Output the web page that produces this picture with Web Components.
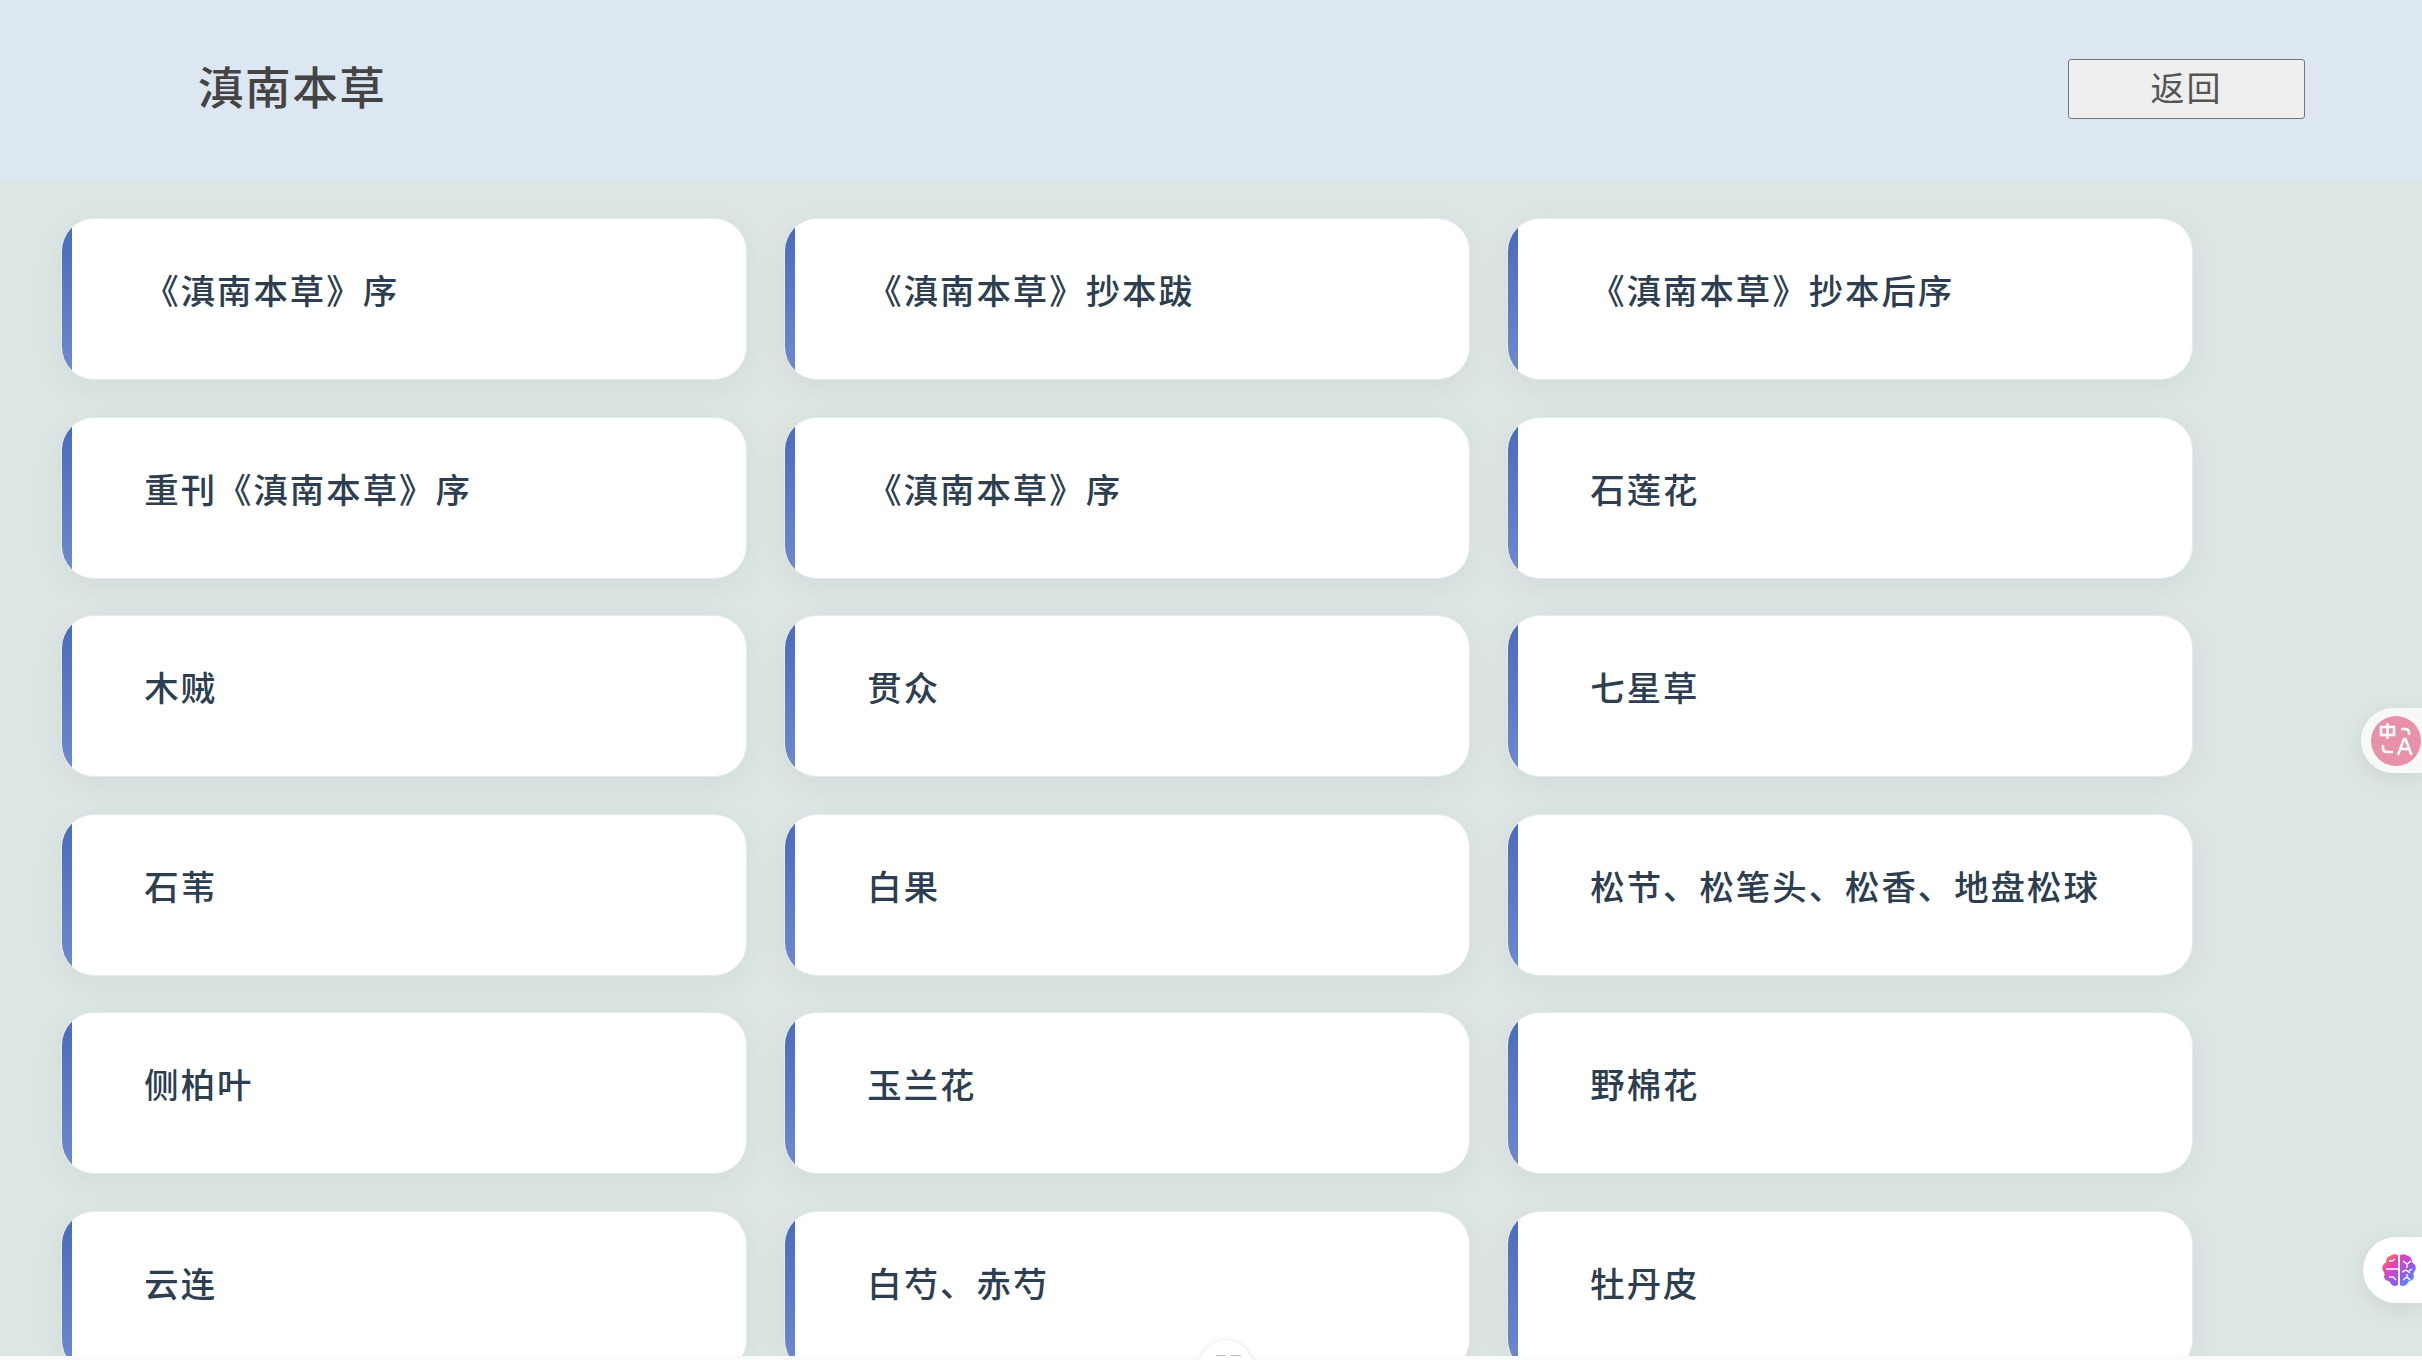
<!DOCTYPE html>
<html lang="zh"><head><meta charset="utf-8"><style>
html,body{margin:0;height:100%;background:#fafafa;overflow:hidden;font-family:"Noto Sans CJK SC","Liberation Sans",sans-serif}
</style></head><body>
<herb-page></herb-page>
<script>
class HerbHeader extends HTMLElement{constructor(){super();this.attachShadow({mode:'open'}).innerHTML=`<style>
:host{display:flex;align-items:flex-start;justify-content:space-between;height:181px;background:#dce7f1;padding:59px 117px 0 198px;box-sizing:border-box}
h1{margin:-4.5px 0 0;font-size:45.6px;line-height:60px;font-weight:500;color:#444;letter-spacing:1.5px}
button{width:237px;height:60px;box-sizing:border-box;background:#efefef;border:1px solid #767676;border-radius:3px;color:#555;font:400 34px/1 "Noto Sans CJK SC",sans-serif;padding:0 0 5px;letter-spacing:2px}
</style><h1><slot name="title"></slot></h1><button><slot name="action"></slot></button>`}}
class HerbCard extends HTMLElement{constructor(){super();this.attachShadow({mode:'open'}).innerHTML=`<style>
:host{display:block;position:relative;height:162px;box-sizing:border-box;background:#fff;border:1px solid #e4eaf0;border-radius:33px;box-shadow:0 8px 32px rgba(44,62,80,.06);overflow:hidden;padding:45px 20px 0 82.5px;color:#2c3e50;font-size:34.4px;line-height:50px;font-weight:500;letter-spacing:2px;white-space:nowrap}
:host::before{content:"";position:absolute;left:-1px;top:-1px;bottom:-1px;width:11.5px;background:linear-gradient(180deg,#4a69bd,#6f8ad0)}
</style><slot></slot>`}}
class HerbGrid extends HTMLElement{constructor(){super();this.attachShadow({mode:'open'}).innerHTML=`<style>
:host{display:block;height:1175px;overflow:hidden;background:#dce6e4;padding:37px 0 0 60.8px;box-sizing:border-box}
div{display:grid;grid-template-columns:repeat(3,686px);grid-auto-rows:162px;gap:36.6px 37px}
</style><div><slot></slot></div>`}}
class FloatTab extends HTMLElement{constructor(){super();this.attachShadow({mode:'open'}).innerHTML=`<style>
:host{position:absolute;right:0;display:flex;align-items:center;box-sizing:border-box;border-radius:33px 0 0 33px;box-shadow:0 6px 24px rgba(0,0,0,.08)}
</style><slot></slot>`}}
class HandleDot extends HTMLElement{constructor(){super();this.attachShadow({mode:'open'}).innerHTML=`<style>
:host{position:absolute;left:1198px;top:1339px;width:56px;height:28px;box-sizing:border-box;background:#fff;border:1px solid #eee;border-radius:28px 28px 0 0;box-shadow:0 0 8px rgba(0,0,0,.04)}
i{position:absolute;top:15px;width:10px;height:1px;background:#bbb}
</style><i style="left:17px"></i><i style="left:32px"></i>`}}
class HerbPage extends HTMLElement{constructor(){super();
const items=['《滇南本草》序','《滇南本草》抄本跋','《滇南本草》抄本后序','重刊《滇南本草》序','《滇南本草》序','石莲花','木贼','贯众','七星草','石苇','白果','松节、松笔头、松香、地盘松球','侧柏叶','玉兰花','野棉花','云连','白芍、赤芍','牡丹皮'];
this.attachShadow({mode:'open'}).innerHTML=`<style>
:host{display:block;position:relative;width:2422px;height:1360px;overflow:hidden;background:#fafafa}
</style>
<herb-header><span slot="title">滇南本草</span><span slot="action">返回</span></herb-header>
<herb-grid>${items.map(t=>`<herb-card>${t}</herb-card>`).join('')}</herb-grid>
<handle-dot></handle-dot>
<float-tab style="top:708px;height:65px;width:61px;padding-left:10px;background:rgba(255,255,255,.75)">
<svg width="50" height="50" viewBox="0 0 50 50"><circle cx="25" cy="25" r="25" fill="#e991a9"/><g fill="none" stroke="#fff" stroke-width="2.6"><rect x="10" y="11" width="13" height="8"/><path d="M16.5 7v16M30 13h4q4 0 4 4v2M12 29v3q0 4 4 4h6"/><path d="M27 39l6-16h1.5l6 16M29.5 33h9.5"/></g></svg></float-tab>
<float-tab style="top:1237px;height:66px;width:59px;padding-left:18px;background:#fff">
<svg width="36" height="34" viewBox="0 0 36 34"><defs><linearGradient id="b" x1="0" y1="0" x2="1" y2="1"><stop offset="0" stop-color="#ff9a2e"/><stop offset=".3" stop-color="#ee3fb0"/><stop offset=".6" stop-color="#9a55f0"/><stop offset="1" stop-color="#2ea8ff"/></linearGradient></defs>
<path fill="url(#b)" d="M17 2v30q-3 2-6 0-2-2-3-4-4 0-5-4 1-3 0-5-3-3-1-7 2-2 3-3 0-5 4-6 3-3 8-1zM19 2q5-2 8 1 4 1 4 6 1 1 3 3 2 4-1 7-1 2 0 5-1 4-5 4-1 2-3 4-3 2-6 0z"/>
<g fill="none" stroke="#fff" stroke-width="1.4"><path d="M5 16h12M8 8h3l3-2M8 24h4l3 3M22 8l4 3 4-3M26 11v4M21 19l4-2 4 3M31 16l-3 2M22 27l4-3 3 3M26 24v-3"/></g></svg></float-tab>`}}
customElements.define('herb-header',HerbHeader);customElements.define('herb-card',HerbCard);customElements.define('herb-grid',HerbGrid);customElements.define('float-tab',FloatTab);customElements.define('handle-dot',HandleDot);customElements.define('herb-page',HerbPage);
</script></body></html>
